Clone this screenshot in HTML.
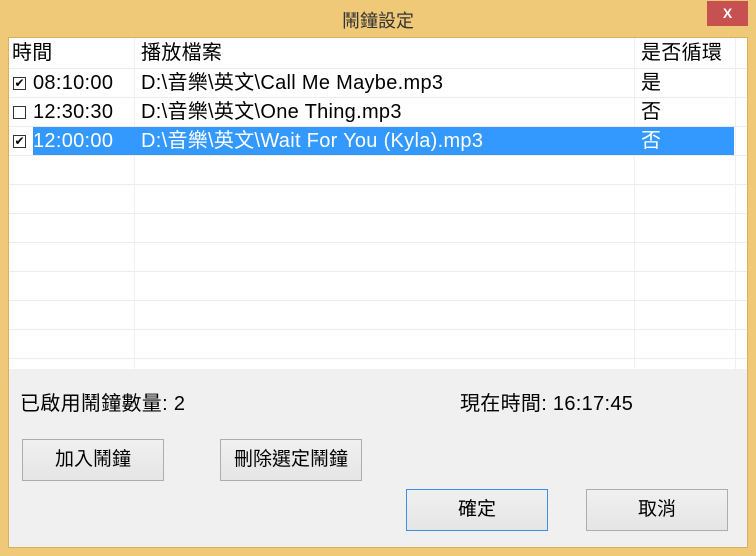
<!DOCTYPE html>
<html><head><meta charset="utf-8"><style>
*{margin:0;padding:0;box-sizing:border-box}
body{width:756px;height:556px;background:#efc977;position:relative;overflow:hidden;font-family:"Liberation Sans","Noto Sans CJK TC",sans-serif;color:#000}
.abs{position:absolute}
.title{left:0;width:756px;top:7px;text-align:center;font-size:18px;color:#333}
.close{left:707px;top:1px;width:41px;height:25px;background:#c75050;color:#fff;font-weight:bold;font-size:14px;text-align:center;line-height:25px}
.client{left:8px;top:37px;width:740px;height:511px;background:#f0f0f0;border:1px solid #d8b060}
.lv{left:9px;top:38px;width:738px;height:331px;background:#fff;overflow:hidden}
.vl{position:absolute;top:0;width:1px;height:331px;background:#eef0f2}
.hrow{position:absolute;left:0;width:738px;height:1px;background:#ececec}
.t{position:absolute;font-size:20px;white-space:nowrap;line-height:29px;letter-spacing:0.3px}
.cb{position:absolute;width:13px;height:13px;border:1px solid #333;background:#fff;font-size:12px;line-height:11px;text-align:center}
.btn{position:absolute;width:142px;height:42px;border:1px solid #adadad;background:linear-gradient(#f0f0f0,#e5e5e5);font-size:19px;text-align:center;line-height:40px}
</style></head><body>
<div class="abs title">鬧鐘設定</div>
<div class="abs close">X</div>
<div class="abs client"></div>
<div class="abs lv">
 <div class="hrow" style="top:30px;background:#e6ecf2"></div>
 <div class="hrow" style="top:59px"></div>
 <div class="hrow" style="top:88px"></div>
 <div class="hrow" style="top:117px"></div>
 <div class="hrow" style="top:146px"></div>
 <div class="hrow" style="top:175px"></div>
 <div class="hrow" style="top:204px"></div>
 <div class="hrow" style="top:233px"></div>
 <div class="hrow" style="top:262px"></div>
 <div class="hrow" style="top:291px"></div>
 <div class="hrow" style="top:320px"></div>
 <div class="vl" style="left:125px"></div>
 <div class="vl" style="left:625px"></div>
 <div class="vl" style="left:726px"></div>
 <div style="position:absolute;left:24px;top:89px;width:701px;height:28px;background:#3399ff"></div>
 <div class="t" style="left:3px;top:1px">時間</div>
 <div class="t" style="left:132px;top:1px">播放檔案</div>
 <div class="t" style="left:632px;top:1px">是否循環</div>
 <div class="cb" style="left:4px;top:39px">✔</div>
 <div class="t" style="left:24px;top:31px">08:10:00</div>
 <div class="t" style="left:132px;top:31px">D:\音樂\英文\Call Me Maybe.mp3</div>
 <div class="t" style="left:632px;top:31px">是</div>
 <div class="cb" style="left:4px;top:68px"></div>
 <div class="t" style="left:24px;top:60px">12:30:30</div>
 <div class="t" style="left:132px;top:60px">D:\音樂\英文\One Thing.mp3</div>
 <div class="t" style="left:632px;top:60px">否</div>
 <div class="cb" style="left:4px;top:97px">✔</div>
 <div class="t" style="left:24px;top:89px;color:#fff">12:00:00</div>
 <div class="t" style="left:132px;top:89px;color:#fff">D:\音樂\英文\Wait For You (Kyla).mp3</div>
 <div class="t" style="left:632px;top:89px;color:#fff">否</div>
</div>
<div class="t" style="left:20px;top:390px">已啟用鬧鐘數量: 2</div>
<div class="t" style="left:460px;top:390px">現在時間: 16:17:45</div>
<div class="btn" style="left:22px;top:439px">加入鬧鐘</div>
<div class="btn" style="left:220px;top:439px">刪除選定鬧鐘</div>
<div class="btn" style="left:406px;top:489px;border-color:#3c8fe6">確定</div>
<div class="btn" style="left:586px;top:489px">取消</div>
</body></html>
